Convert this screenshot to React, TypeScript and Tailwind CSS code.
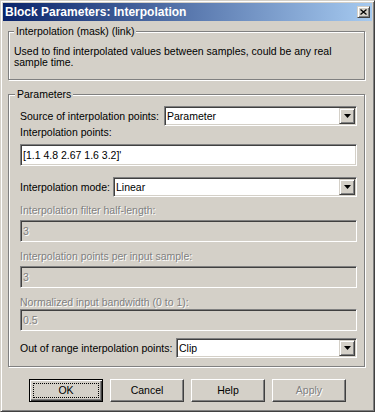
import React from "react";

const sunken =
  "border border-t-[#808080] border-l-[#808080] border-b-white border-r-white shadow-[inset_1px_1px_0_#404040,inset_-1px_-1px_0_#D4D0C8] p-[1px]";
const raised =
  "border border-t-[#D4D0C8] border-l-[#D4D0C8] border-b-[#404040] border-r-[#404040] shadow-[inset_1px_1px_0_#fff,inset_-1px_-1px_0_#808080]";
const disabledText = "text-[#808080] [text-shadow:1px_1px_0_#fff]";

function Combo({ value, width }: { value: string; width: string }) {
  return (
    <div className={`${width} h-[20px] bg-white flex ${sunken}`}>
      <div className="flex-1 flex items-center pl-[1px] leading-[13px]">{value}</div>
      <div className={`w-[16px] h-full flex items-center justify-center bg-[#D4D0C8] ${raised}`}>
        <svg width="7" height="4" viewBox="0 0 7 4">
          <path d="M0 0H7L3.5 4Z" fill="#000" />
        </svg>
      </div>
    </div>
  );
}

function TextBox({ value, disabled }: { value: string; disabled?: boolean }) {
  return (
    <div
      className={`w-full h-[22px] flex items-center ${sunken} ${
        disabled ? "bg-[#D4D0C8]" : "bg-white"
      }`}
    >
      <span className={`pl-[1px] leading-[13px] ${disabled ? disabledText : ""}`}>{value}</span>
    </div>
  );
}

function Button({
  label,
  isDefault,
  disabled,
}: {
  label: string;
  isDefault?: boolean;
  disabled?: boolean;
}) {
  if (isDefault) {
    return (
      <div className="w-[74px] h-[23px] border border-black bg-[#D4D0C8] shadow-[inset_1px_1px_0_#fff,inset_-1px_-1px_0_#404040,inset_-2px_-2px_0_#808080] p-[3px] flex">
        <div className="flex-1 border border-dotted border-black flex items-center justify-center leading-[13px]">
          {label}
        </div>
      </div>
    );
  }
  return (
    <div
      className={`w-[74px] h-[23px] flex items-center justify-center bg-[#D4D0C8] border border-t-white border-l-white border-b-[#404040] border-r-[#404040] shadow-[inset_-1px_-1px_0_#808080] leading-[13px] ${
        disabled ? disabledText : ""
      }`}
    >
      {label}
    </div>
  );
}

export default function App() {
  return (
    <div className="w-[375px] h-[412px] bg-[#D4D0C8] border border-t-[#D4D0C8] border-l-[#D4D0C8] border-b-[#404040] border-r-[#404040] shadow-[inset_1px_1px_0_#fff,inset_-1px_-1px_0_#808080] p-[2px] flex flex-col font-['Liberation_Sans',Arial,sans-serif] text-[10.5px] text-black">
      {/* Title bar */}
      <div className="h-[18px] flex items-center bg-[linear-gradient(to_right,#0A246A,#A6CAF0)] pl-[2px] pr-[2px]">
        <span className="font-bold text-[12px] leading-[14px] text-white">
          Block Parameters: Interpolation
        </span>
        <div className={`ml-auto w-[13px] h-[12px] bg-[#D4D0C8] flex items-center justify-center ${raised}`}>
          <svg width="7" height="6" viewBox="0 0 7 6">
            <path d="M0.5 0.5L6.5 5.5M6.5 0.5L0.5 5.5" stroke="#000" strokeWidth="1.3" />
          </svg>
        </div>
      </div>

      {/* Group 1 */}
      <div className="relative mt-[10px] ml-[5px] w-[357px] border border-[#808080] shadow-[inset_1px_1px_0_#fff,1px_1px_0_#fff] pt-[14px] pb-[11px] pl-[5px]">
        <span className="absolute left-[5px] -top-[7px] px-[2px] bg-[#D4D0C8] leading-[13px]">
          Interpolation (mask) (link)
        </span>
        <p className="leading-[11px]">
          Used to find interpolated values between samples, could be any real
          <br />
          sample time.
        </p>
      </div>

      {/* Group 2 */}
      <div className="relative mt-[14px] ml-[5px] w-[357px] h-[273px] border border-[#808080] shadow-[inset_1px_1px_0_#fff,1px_1px_0_#fff] pl-[11px] pr-[7px] flex flex-col">
        <span className="absolute left-[6px] -top-[7px] px-[2px] bg-[#D4D0C8] leading-[13px]">
          Parameters
        </span>

        <div className="mt-[11px] flex items-center justify-between">
          <span className="leading-[13px]">Source of interpolation points:</span>
          <Combo value="Parameter" width="w-[193px]" />
        </div>

        <div className="mt-0 leading-[13px]">Interpolation points:</div>
        <div className="mt-[5px]">
          <TextBox value="[1.1 4.8 2.67 1.6 3.2]'" />
        </div>

        <div className="mt-[11px] flex items-center justify-between">
          <span className="leading-[13px]">Interpolation mode:</span>
          <Combo value="Linear" width="w-[244px]" />
        </div>

        <div className={`mt-[7px] leading-[13px] ${disabledText}`}>
          Interpolation filter half-length:
        </div>
        <div className="mt-[3px]">
          <TextBox value="3" disabled />
        </div>

        <div className={`mt-[8px] leading-[13px] ${disabledText}`}>
          Interpolation points per input sample:
        </div>
        <div className="mt-[3px]">
          <TextBox value="3" disabled />
        </div>

        <div className={`mt-[8px] leading-[13px] ${disabledText}`}>
          Normalized input bandwidth (0 to 1):
        </div>
        <div className="mt-0">
          <TextBox value="0.5" disabled />
        </div>

        <div className="mt-[7px] flex items-center justify-between">
          <span className="leading-[13px]">Out of range interpolation points:</span>
          <Combo value="Clip" width="w-[181px]" />
        </div>
      </div>

      {/* Buttons */}
      <div className="mt-[12px] flex justify-center gap-[7px]">
        <Button label="OK" isDefault />
        <Button label="Cancel" />
        <Button label="Help" />
        <Button label="Apply" disabled />
      </div>
    </div>
  );
}
